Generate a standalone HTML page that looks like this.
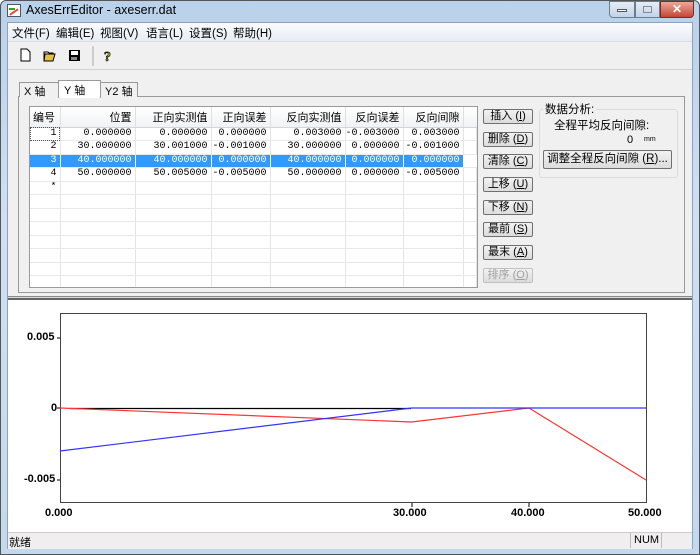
<!DOCTYPE html>
<html><head><meta charset="utf-8"><style>
*{box-sizing:border-box;margin:0;padding:0}
body{width:700px;height:555px;overflow:hidden;background:#fff;font-family:"Liberation Sans","Noto Sans CJK SC",sans-serif;font-size:12px;color:#000;position:relative}
.abs{position:absolute}
.frame{left:0;top:0;width:700px;height:555px;background:linear-gradient(#b9d1ea,#cfe0f2 40%,#c4d8ee);border:1px solid #555;border-radius:6px 6px 0 0}
.client{left:7px;top:22px;width:686px;height:527px;background:#f0f0f0;border:1px solid #8da3bd}
.btn{position:absolute;left:483px;width:50px;height:15px;border:1px solid #707070;border-radius:2px;background:linear-gradient(#f2f2f2,#dcdcdc);font-size:11px;text-align:center;line-height:13px;white-space:nowrap}
table{border-collapse:collapse;font-size:11px}
td{border-right:1px solid #e4e4e4;border-bottom:1px solid #e8e8e8;height:13.5px;text-align:right;padding-right:3px;white-space:nowrap;font-family:"Liberation Mono","Noto Sans CJK SC",monospace;font-size:10px;line-height:12px;overflow:hidden}
th{font-weight:normal;text-align:right;padding-right:3px;border-right:1px solid #e0e0e0;height:20px;background:linear-gradient(#fff,#f1f2f4);border-bottom:1px solid #d5d5d5;font-size:11px}
tr.sel td{background:#3399ff;color:#fff;border-right:1px solid #fff}
.ax{font-family:"Liberation Sans",sans-serif;font-weight:bold;font-size:11px;position:absolute}
</style></head><body>
<div class="abs frame"></div>
<div class="abs" style="left:7px;top:4px;width:14px;height:13px;background:#fff;border:1px solid #556;"><div style="position:absolute;left:1px;top:6px;width:10px;height:2px;background:#e44;transform:rotate(-35deg)"></div><div style="position:absolute;left:1px;top:3px;width:6px;height:2px;background:#2a2"></div></div>
<div class="abs" style="left:26px;top:3px;font-size:12.5px;color:#000">AxesErrEditor - axeserr.dat</div>
<div class="abs" style="left:609px;top:1px;width:26px;height:17px;border:1px solid #6b7d94;border-radius:0 0 0 4px;background:linear-gradient(#e4edf7,#c3d4e8)"><div style="margin:7px 7px;width:10px;height:3px;background:#fff;border:1px solid #555"></div></div>
<div class="abs" style="left:635px;top:1px;width:25px;height:17px;border:1px solid #6b7d94;background:linear-gradient(#e4edf7,#c3d4e8)"><div style="margin:4px 7px;width:9px;height:7px;border:1px solid #889"></div></div>
<div class="abs" style="left:660px;top:1px;width:34px;height:17px;border:1px solid #7a2b23;border-radius:0 0 4px 0;background:linear-gradient(#e9a99a,#c74534);color:#fff;font-weight:bold;text-align:center;font-size:12px;line-height:15px">✕</div>
<div class="abs client"></div>
<div class="abs" style="left:8px;top:23px;width:684px;height:19px;background:linear-gradient(#fafbfd,#e8edf4);border-bottom:1px solid #d8dde4"></div>
<div class="abs" style="left:12px;top:25px;font-size:11.5px">文件(F)</div>
<div class="abs" style="left:56px;top:25px;font-size:11.5px">编辑(E)</div>
<div class="abs" style="left:100px;top:25px;font-size:11.5px">视图(V)</div>
<div class="abs" style="left:146px;top:25px;font-size:11.5px">语言(L)</div>
<div class="abs" style="left:189px;top:25px;font-size:11.5px">设置(S)</div>
<div class="abs" style="left:233px;top:25px;font-size:11.5px">帮助(H)</div>
<div class="abs" style="left:8px;top:42px;width:684px;height:28px;background:#f0f0f0;border-bottom:1px solid #d0d0d0"></div>
<svg class="abs" style="left:18px;top:46px" width="100" height="20">
<path d="M3 3h6l3 3v9H3z" fill="#fff" stroke="#000"/>
<path d="M27 8h10l-2 7H26z" fill="#e8c040" stroke="#000"/><path d="M26 15V6h4l1 1h4v1" fill="none" stroke="#000"/>
<rect x="51" y="4" width="11" height="11" fill="#000"/><rect x="53" y="5" width="7" height="4" fill="#fff"/><rect x="53" y="11" width="6" height="3" fill="#888"/>
<line x1="75" y1="0" x2="75" y2="20" stroke="#aaa"/>
<text x="86" y="15" font-size="14" font-weight="bold" fill="#dd0" stroke="#000" stroke-width=".7" font-family="Liberation Serif">?</text>
</svg>
<div class="abs" style="left:18px;top:96px;width:667px;height:197px;border:1px solid #999;background:#f0f0f0"></div>
<div class="abs" style="left:19px;top:82px;width:40px;height:15px;border:1px solid #999;border-bottom:none;background:#f0f0f0;font-size:11px;padding-left:4px">X 轴</div>
<div class="abs" style="left:58px;top:80px;width:43px;height:18px;border:1px solid #999;border-bottom:none;background:#fff;font-size:11px;padding-left:5px;padding-top:1px">Y 轴</div>
<div class="abs" style="left:100px;top:82px;width:38px;height:15px;border:1px solid #999;border-bottom:none;background:#f0f0f0;font-size:11px;padding-left:4px">Y2 轴</div>
<div class="abs" style="left:29px;top:106px;width:449px;height:182px;border:1px solid #999;background:#fff;overflow:hidden">
<table style="width:447px;table-layout:fixed">
<colgroup><col style="width:30px"><col style="width:75px"><col style="width:76px"><col style="width:59px"><col style="width:75px"><col style="width:58px"><col style="width:60px"><col></colgroup>
<tr><th style="text-align:left;padding-left:3px">编号</th><th>位置</th><th>正向实测值</th><th>正向误差</th><th>反向实测值</th><th>反向误差</th><th>反向间隙</th><th style="border-right:none"></th></tr>
<tr><td style="outline:1px dotted #555;outline-offset:-1px">1</td><td>0.000000</td><td>0.000000</td><td>0.000000</td><td>0.003000</td><td>-0.003000</td><td>0.003000</td><td></td></tr>
<tr><td>2</td><td>30.000000</td><td>30.001000</td><td>-0.001000</td><td>30.000000</td><td>0.000000</td><td>-0.001000</td><td></td></tr>
<tr class="sel"><td>3</td><td>40.000000</td><td>40.000000</td><td>0.000000</td><td>40.000000</td><td>0.000000</td><td>0.000000</td><td style="background:#fff"></td></tr>
<tr><td>4</td><td>50.000000</td><td>50.005000</td><td>-0.005000</td><td>50.000000</td><td>0.000000</td><td>-0.005000</td><td></td></tr>
<tr><td>*</td><td></td><td></td><td></td><td></td><td></td><td></td><td></td></tr>
<tr><td></td><td></td><td></td><td></td><td></td><td></td><td></td><td></td></tr>
<tr><td></td><td></td><td></td><td></td><td></td><td></td><td></td><td></td></tr>
<tr><td></td><td></td><td></td><td></td><td></td><td></td><td></td><td></td></tr>
<tr><td></td><td></td><td></td><td></td><td></td><td></td><td></td><td></td></tr>
<tr><td></td><td></td><td></td><td></td><td></td><td></td><td></td><td></td></tr>
<tr><td></td><td></td><td></td><td></td><td></td><td></td><td></td><td></td></tr>
<tr><td></td><td></td><td></td><td></td><td></td><td></td><td></td><td></td></tr>
</table></div>
<div class="btn" style="top:109px">插入 (<u>I</u>)</div>
<div class="btn" style="top:132px">删除 (<u>D</u>)</div>
<div class="btn" style="top:154px">清除 (<u>C</u>)</div>
<div class="btn" style="top:177px">上移 (<u>U</u>)</div>
<div class="btn" style="top:200px">下移 (<u>N</u>)</div>
<div class="btn" style="top:222px">最前 (<u>S</u>)</div>
<div class="btn" style="top:245px">最末 (<u>A</u>)</div>
<div class="btn" style="top:268px;color:#a0a0a0;border-color:#c0c0c0">排序 (<u>O</u>)</div>
<div class="abs" style="left:539px;top:109px;width:139px;height:69px;border:1px solid #dcdcdc;border-radius:3px"></div>
<div class="abs" style="left:543px;top:101px;background:#f0f0f0;padding:0 2px;font-size:11.5px">数据分析:</div>
<div class="abs" style="left:554px;top:117px;font-size:11.5px">全程平均反向间隙:</div>
<div class="abs" style="left:627px;top:134px;font-size:11px">0</div>
<div class="abs" style="left:644px;top:136px;font-size:7px">mm</div>
<div class="abs" style="left:543px;top:150px;width:129px;height:19px;border:1px solid #707070;border-radius:2px;background:linear-gradient(#f2f2f2,#dcdcdc);font-size:11.5px;text-align:center;line-height:17px;white-space:nowrap">调整全程反向间隙 (<u>R</u>)...</div>
<div class="abs" style="left:8px;top:296px;width:684px;height:4px;border-top:1px solid #888;border-bottom:2px solid #666;background:#d8d8d8"></div>
<div class="abs" style="left:8px;top:300px;width:684px;height:232px;background:#fff"></div>
<svg class="abs" style="left:0;top:0" width="700" height="555">
<rect x="60.5" y="313.5" width="586" height="189" fill="none" stroke="#444" stroke-width="1"/>
<g stroke="#000"><line x1="57" y1="338" x2="60" y2="338"/><line x1="57" y1="408" x2="60" y2="408"/><line x1="57" y1="480" x2="60" y2="480"/>
<line x1="412" y1="503" x2="412" y2="507"/><line x1="529" y1="503" x2="529" y2="507"/></g>
<line x1="70" y1="408.5" x2="411" y2="408.5" stroke="#000" stroke-width="1.3"/>
<polyline points="60,408 411.6,422 529,408 646,480" fill="none" stroke="#f33" stroke-width="1.2"/>
<polyline points="60,451 411.6,408 646,408" fill="none" stroke="#33f" stroke-width="1.2"/>
</svg>
<div class="ax" style="left:27px;top:331px">0.005</div>
<div class="ax" style="left:51px;top:402px">0</div>
<div class="ax" style="left:24px;top:473px">-0.005</div>
<div class="ax" style="left:45px;top:507px">0.000</div>
<div class="ax" style="left:393px;top:507px">30.000</div>
<div class="ax" style="left:511px;top:507px">40.000</div>
<div class="ax" style="left:628px;top:507px">50.000</div>
<div class="abs" style="left:8px;top:532px;width:684px;height:17px;background:#f0eeee;border-top:1px solid #ccc"></div>
<div class="abs" style="left:9px;top:534px;font-size:11px">就绪</div>
<div class="abs" style="left:630px;top:533px;width:32px;height:15px;border-left:1px solid #bbb;border-right:1px solid #bbb;font-size:11px;padding-left:3px;line-height:14px">NUM</div>
</body></html>
